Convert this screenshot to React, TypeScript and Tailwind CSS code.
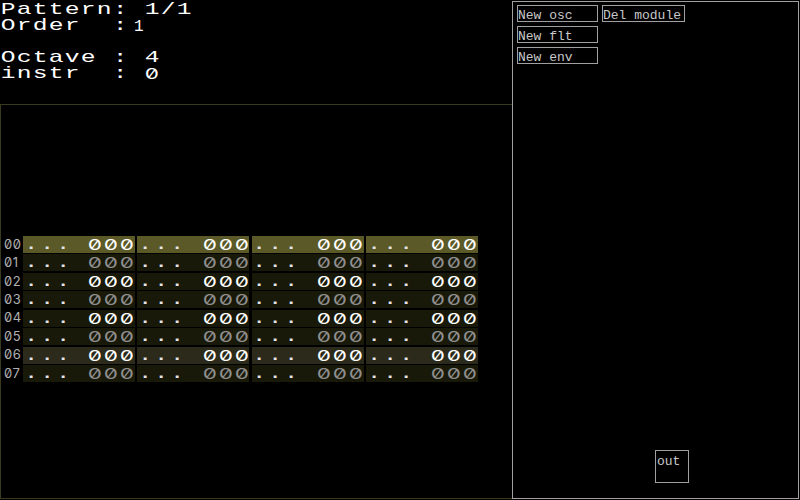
import React from "react";

// wide pixel-ish glyphs: every char sits in a 16px cell and is stretched
function Wide({ text, className = "" }: { text: string; className?: string }) {
  return (
    <span className={"inline-flex " + className}>
      {[...text].map((c, i) => (
        <span key={i} className="w-4 flex justify-center">
          {c === "0" ? (
            <span className="inline-block scale-x-[1.5] font-['Inter',sans-serif] text-[15px] slashed-zero">0</span>
          ) : (
            <span className="inline-block scale-x-[1.45]">{c === " " ? "\u00a0" : c}</span>
          )}
        </span>
      ))}
    </span>
  );
}

function Header() {
  return (
    <div className="h-[104px] pt-[2px] text-white text-[17px] leading-[16px]">
      <div className="h-4 flex items-center">
        <Wide text="Pattern: 1/1" />
      </div>
      <div className="h-4 flex items-center">
        <Wide text="Order  :" />
        <span className="text-[16px] pl-[6px] pt-[1px]">1</span>
      </div>
      <div className="h-4" />
      <div className="h-4 flex items-center">
        <Wide text="Octave : 4" />
      </div>
      <div className="h-4 flex items-center">
        <Wide text="instr  : 0" />
      </div>
    </div>
  );
}

function rowBg(i: number) {
  if (i === 0) return "bg-[#5a5927]";
  if (i === 6) return "bg-[#2b2a1b]";
  return "bg-[#191909]";
}

function PatternRow({ i }: { i: number }) {
  const zero = i % 2 === 0 ? "text-white" : "text-[#8e8e8e]";
  return (
    <div className="flex h-[17px]">
      <div className="w-[22px] pl-[3px] flex items-center font-['Inter',sans-serif] slashed-zero text-[13px] tracking-[0.5px] text-[#b0b0b0]">
        {"0" + i}
      </div>
      <div className="flex gap-[2.3px]">
        {[0, 1, 2, 3].map((ch) => (
          <div key={ch} className={"w-[112px] flex items-center text-[17px] leading-[15px] " + rowBg(i)}>
            <Wide text="... " className="text-[#e6e6e6]" />
            <Wide text="000" className={zero} />
          </div>
        ))}
      </div>
    </div>
  );
}

export default function App() {
  return (
    <div className="w-[800px] h-[500px] bg-black flex overflow-hidden font-['Liberation_Mono','DejaVu_Sans_Mono',monospace]">
      <div className="w-[512px] h-[499px] flex flex-col">
        <Header />
        <div className="h-[395px] border-t border-l border-b border-[#3a3a20] pt-[131px] flex flex-col gap-[1.43px]">
          {[0, 1, 2, 3, 4, 5, 6, 7].map((i) => (
            <PatternRow key={i} i={i} />
          ))}
        </div>
      </div>
      <div className="relative mt-[1px] w-[287px] h-[498px] border border-[#a0a0a0] pl-[4px] pt-[3px] text-[13px] text-[#c8c8c8]">
        <div className="flex flex-col gap-[4px]">
          <div className="flex gap-[4px]">
            <button className="w-[81px] h-[17px] border border-[#a0a0a0] text-left pt-[3px] leading-[13px]">New osc</button>
            <button className="w-[83px] h-[17px] border border-[#a0a0a0] text-left pt-[3px] leading-[13px]">Del module</button>
          </div>
          <button className="w-[81px] h-[17px] border border-[#a0a0a0] text-left pt-[3px] leading-[13px]">New flt</button>
          <button className="w-[81px] h-[17px] border border-[#a0a0a0] text-left pt-[3px] leading-[13px]">New env</button>
        </div>
        <div className="absolute left-[142px] top-[448px] w-[34px] h-[33px] border border-[#a0a0a0] pl-[1px] pt-[4px] leading-[13px] text-[#c8c8c8]">
          out
        </div>
      </div>
    </div>
  );
}
